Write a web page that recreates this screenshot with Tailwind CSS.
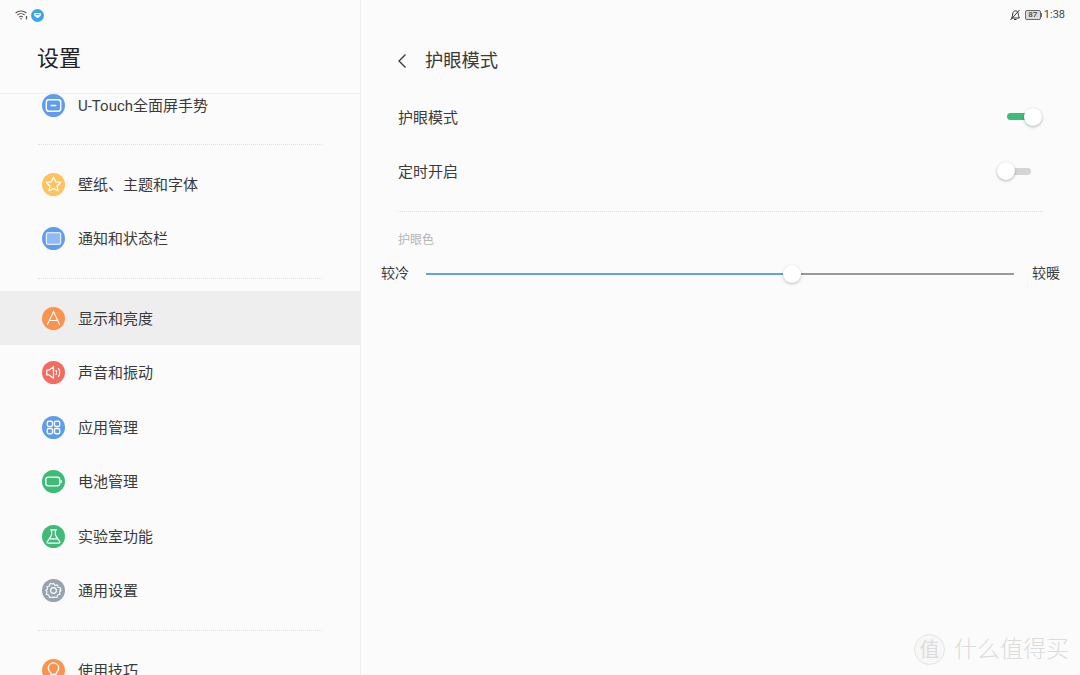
<!DOCTYPE html>
<html lang="zh-CN">
<head>
    <meta charset="UTF-8">
    <title>设置</title>
    <script src="https://cdn.jsdelivr.net/npm/@tailwindcss/browser@4"></script>
</head>
<body class="bg-[#fbfbfb] text-[#3a3a3a] font-['Roboto','Noto_Sans_CJK_SC',sans-serif]">
<div class="relative w-[1080px] h-[675px] overflow-hidden flex">
    <!-- left column -->
    <aside class="w-[361px] h-full shrink-0 border-r border-[#f0f0f0] flex flex-col overflow-hidden">
        <header class="relative z-10 h-[94px] shrink-0 bg-[#fbfbfb] border-b border-[#efefef]">
            <div class="h-[30px] pl-[15px] flex items-center gap-[3px]">
                <svg class="w-[13px] h-[10px]" viewBox="0 0 13 10" fill="none" stroke="#555" stroke-width="1.1"><path d="M.6 3C3.6.4 8.4.4 11.4 3M2.4 5c2-1.7 5.200-1.700 7.200 0M4.200 7c1-.8 2.600-.8 3.600 0"/><circle cx="6" cy="8.800" r=".8" fill="#555" stroke="none"/><path d="M11.500 6v3.500" stroke-width="1.200"/></svg>
                <svg class="w-[13px] h-[13px]" viewBox="0 0 12 12"><circle cx="6" cy="6" r="6" fill="#3ea4ea"/><path d="M3 3.800h6v2.400l-3 2.400-3-2.400z" fill="#fff"/><path d="M4 5.200h4" stroke="#3ea4ea" stroke-width=".8"/></svg>
            </div>
            <h1 class="pl-[37px] mt-[14px] text-[22px] leading-[30px] text-[#222]">设置</h1>
        </header>
        <div class="-mt-[16px] flex flex-col">
            <a class="h-[54px] pl-[42px] flex items-center gap-[13px] text-[15px]">
                <svg class="w-[23px] h-[23px] shrink-0" viewBox="0 0 24 24"><circle cx="12" cy="12" r="12" fill="#5f9cee"/><rect x="4.500" y="6" width="15" height="12" rx="2.500" fill="none" stroke="#fff" stroke-width="1.500"/><path d="M9 12h6" stroke="#fff" stroke-width="1.600"/></svg>
                <span class="mt-[2px]">U-Touch全面屏手势</span>
            </a>
            <div class="h-[25px] flex items-center pl-[38px] pr-[38px]"><div class="w-full border-t border-dotted border-[#ddd]"></div></div>
            <a class="h-[54px] pl-[42px] flex items-center gap-[13px] text-[15px]">
                <svg class="w-[23px] h-[23px] shrink-0" viewBox="0 0 24 24"><circle cx="12" cy="12" r="12" fill="#fcc35f"/><path d="M12 4.500l2.300 4.700 5.200.7-3.800 3.600 1 5.100-4.700-2.500-4.700 2.500 1-5.100-3.800-3.600 5.200-.7z" fill="none" stroke="#fff" stroke-width="1.300" stroke-linejoin="round"/></svg>
                <span class="mt-[2px]">壁纸、主题和字体</span>
            </a>
            <a class="h-[55px] pl-[42px] flex items-center gap-[13px] text-[15px]">
                <svg class="w-[23px] h-[23px] shrink-0" viewBox="0 0 24 24"><circle cx="12" cy="12" r="12" fill="#5f9cee"/><rect x="4.500" y="6" width="15" height="12" rx="1.500" fill="#8fbaf4" stroke="#fff" stroke-width="1.100"/></svg>
                <span class="mt-[2px]">通知和状态栏</span>
            </a>
            <div class="h-[25px] flex items-center pl-[38px] pr-[38px]"><div class="w-full border-t border-dotted border-[#ddd]"></div></div>
            <a class="h-[54px] pl-[42px] flex items-center gap-[13px] text-[15px] bg-[#eeeeee]">
                <svg class="w-[23px] h-[23px] shrink-0" viewBox="0 0 24 24"><circle cx="12" cy="12" r="12" fill="#fb9350"/><path d="M5.500 18.500L12 5l6.500 13.500M8 14h8" fill="none" stroke="#fff" stroke-width="1.100"/></svg>
                <span class="mt-[2px]">显示和亮度</span>
            </a>
            <a class="h-[55px] pl-[42px] flex items-center gap-[13px] text-[15px]">
                <svg class="w-[23px] h-[23px] shrink-0" viewBox="0 0 24 24"><circle cx="12" cy="12" r="12" fill="#f36c60"/><path d="M5 9.500h2.500l4.500-3.500v12l-4.500-3.500H5z" fill="none" stroke="#fff" stroke-width="1.300" stroke-linejoin="round"/><path d="M14.500 9.500c1 1.500 1 3.500 0 5M17 7.500c2 3 2 6 0 9" fill="none" stroke="#fff" stroke-width="1.300"/></svg>
                <span class="mt-[2px]">声音和振动</span>
            </a>
            <a class="h-[54px] pl-[42px] flex items-center gap-[13px] text-[15px]">
                <svg class="w-[23px] h-[23px] shrink-0" viewBox="0 0 24 24"><circle cx="12" cy="12" r="12" fill="#5f9cee"/><g fill="none" stroke="#fff" stroke-width="1.400"><rect x="5.500" y="5.500" width="5.500" height="5.500" rx="1.500"/><rect x="13" y="5.500" width="5.500" height="5.500" rx="1.500"/><rect x="5.500" y="13" width="5.500" height="5.500" rx="1.500"/><rect x="13" y="13" width="5.500" height="5.500" rx="1.500"/></g></svg>
                <span class="mt-[2px]">应用管理</span>
            </a>
            <a class="h-[55px] pl-[42px] flex items-center gap-[13px] text-[15px]">
                <svg class="w-[23px] h-[23px] shrink-0" viewBox="0 0 24 24"><circle cx="12" cy="12" r="12" fill="#3fbb78"/><rect x="4" y="7.500" width="14.500" height="9" rx="2.500" fill="none" stroke="#fff" stroke-width="1.400"/><path d="M20 10.500v3" stroke="#fff" stroke-width="1.300"/></svg>
                <span class="mt-[2px]">电池管理</span>
            </a>
            <a class="h-[54px] pl-[42px] flex items-center gap-[13px] text-[15px]">
                <svg class="w-[23px] h-[23px] shrink-0" viewBox="0 0 24 24"><circle cx="12" cy="12" r="12" fill="#3fbb78"/><path d="M8.500 5h7M10 5v5.500l-4.500 7c-.4.800 0 1.500 1 1.500h11c1 0 1.400-.7 1-1.500l-4.500-7V5M8 14.500h8" fill="none" stroke="#fff" stroke-width="1.300" stroke-linejoin="round"/></svg>
                <span class="mt-[2px]">实验室功能</span>
            </a>
            <a class="h-[55px] pl-[42px] flex items-center gap-[13px] text-[15px]">
                <svg class="w-[23px] h-[23px] shrink-0" viewBox="0 0 24 24"><circle cx="12" cy="12" r="12" fill="#98a3b0"/><path d="M12 4.500l1.500 2.300 2.600-.7.800 2.600 2.600.8-.7 2.600L20 12l-1.800 1.400.7 2.600-2.600.8-.8 2.600-2.600-.7L12 19.500l-1.500-.8-2.600.7-.8-2.600-2.600-.8.700-2.600L4 12l1.800-1.400-.7-2.600 2.600-.8.800-2.600 2.600.7z" fill="none" stroke="#fff" stroke-width="1.100" stroke-linejoin="round"/><circle cx="12" cy="12" r="3" fill="none" stroke="#fff" stroke-width="1.200"/></svg>
                <span class="mt-[2px]">通用设置</span>
            </a>
            <div class="h-[25px] flex items-center pl-[38px] pr-[38px]"><div class="w-full border-t border-dotted border-[#ddd]"></div></div>
            <a class="h-[54px] pl-[42px] flex items-center gap-[13px] text-[15px]">
                <svg class="w-[23px] h-[23px] shrink-0" viewBox="0 0 24 24"><circle cx="12" cy="12" r="12" fill="#fb9350"/><path d="M9.500 16c0-2-3-3.500-3-6.500a5.500 5.500 0 0 1 11 0c0 3-3 4.500-3 6.500zM10 19h4" fill="none" stroke="#fff" stroke-width="1.400"/></svg>
                <span class="mt-[2px]">使用技巧</span>
            </a>
        </div>
    </aside>

    <!-- right column -->
    <main class="flex-1 flex flex-col">
        <div class="h-[30px] flex items-center justify-end pr-[15px] text-[11px] text-[#444]">
            <svg class="w-[12px] h-[12px] mr-[4px]" viewBox="0 0 12 12" fill="none" stroke="#333" stroke-width="1"><path d="M2.500 9c1-1 1-2.500 1.200-4C4 3 5 1.800 6.500 1.800S9 3 9.200 4.500c.2 1.700.3 2.700 1.100 4.500zM5 10.500h2.500M1.500 11L10.500 1"/></svg>
            <span class="flex items-center mr-[2px]">
                <span class="w-[16px] h-[10px] border border-[#666] bg-[#ddd] rounded-[2px] text-[8px] leading-[8px] font-medium text-center">87</span>
                <span class="w-[1px] h-[4px] bg-[#666]"></span>
            </span>
            <span>1:38</span>
        </div>

        <div class="h-[61px] pl-[36px] flex items-center gap-[18px]">
            <svg class="w-[10px] h-[16px]" viewBox="0 0 10 16" fill="none" stroke="#333" stroke-width="1.300"><path d="M8.500 1.500L2 8l6.500 6.500"/></svg>
            <h2 class="text-[18.300px] leading-[26px]">护眼模式</h2>
        </div>

        <div class="h-[54px] pl-[37px] pr-[38px] flex items-center justify-between text-[15px]">
            <span>护眼模式</span>
            <span class="relative w-[35px] h-[18px] mb-[3px] flex items-center">
                <span class="block w-[24px] h-[7px] rounded-full bg-[#3fbb78]"></span>
                <span class="absolute right-0 top-0 w-[18px] h-[18px] rounded-full bg-white shadow-[0_1px_3px_rgba(0,0,0,0.3)]"></span>
            </span>
        </div>
        <div class="h-[55px] pl-[37px] pr-[49px] flex items-center justify-between text-[15px]">
            <span>定时开启</span>
            <span class="relative w-[34px] h-[18px] mb-[3px] flex items-center justify-end">
                <span class="block w-[24px] h-[7px] rounded-full bg-[#d5d5d5]"></span>
                <span class="absolute left-0 top-0 w-[18px] h-[18px] rounded-full bg-white shadow-[0_1px_3px_rgba(0,0,0,0.3)]"></span>
            </span>
        </div>

        <div class="mt-[11px] ml-[37px] mr-[37px] border-t border-dotted border-[#ddd]"></div>
        <div class="mt-[20px] ml-[37px] text-[12px] leading-[16px] text-[#b5b5b5]">护眼色</div>

        <div class="mt-[15px] pl-[20px] pr-[20px] flex items-center text-[14px]">
            <span class="w-[45px] shrink-0">较冷</span>
            <div class="relative flex-1 h-[18px] flex items-center">
                <div class="h-[2px] w-[366px] bg-[#6a9fd8]"></div>
                <div class="h-[2px] flex-1 bg-[#999]"></div>
                <div class="absolute left-[357px] top-0 w-[18px] h-[18px] rounded-full bg-white shadow-[0_1px_3px_rgba(0,0,0,0.25)]"></div>
            </div>
            <span class="w-[46px] shrink-0 text-right">较暖</span>
        </div>
    </main>

    <!-- watermark -->
    <div class="absolute right-[11px] bottom-[10px] flex items-center gap-[9px] text-[#dcdcdc]">
        <span class="w-[31px] h-[31px] rounded-full border border-[#e4e4e4] bg-[#f7f7f7] flex items-center justify-center text-[20px] leading-none">值</span>
        <span class="text-[23px] leading-[30px] font-light">什么值得买</span>
    </div>
</div>
</body>
</html>
